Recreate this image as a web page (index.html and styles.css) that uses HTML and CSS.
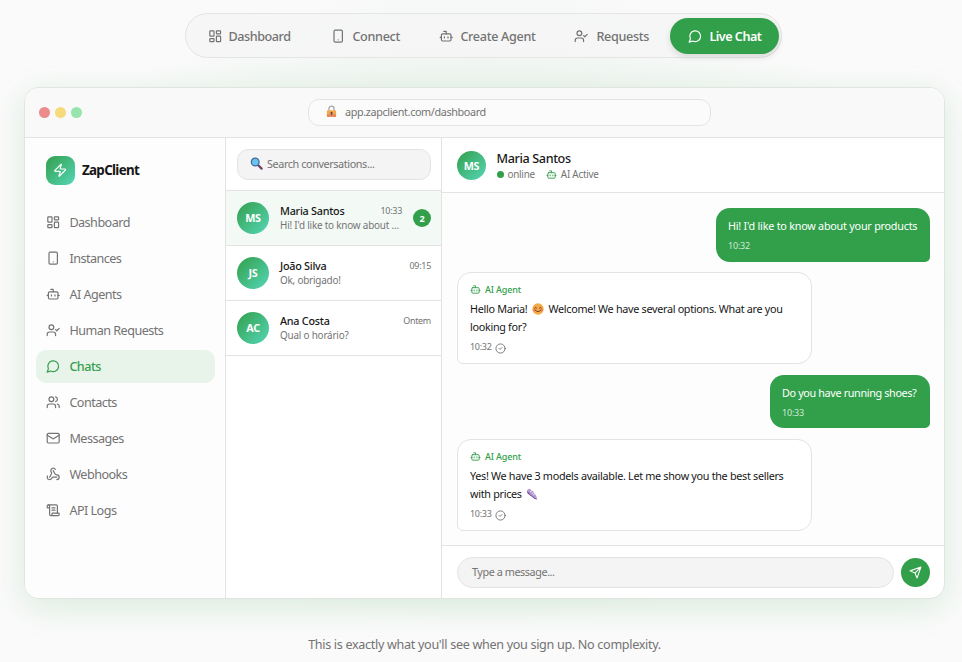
FILE: index.html
```html
<!DOCTYPE html>
<html lang="en">
<head>
<meta charset="utf-8">
<title>ZapClient</title>
<link rel="stylesheet" href="styles.css">
</head>
<body>
<svg class="sprite" aria-hidden="true">
  <symbol id="dashboard" viewBox="0 0 24 24"><rect x="3" y="3" width="7" height="9" rx="1"/><rect x="14" y="3" width="7" height="5" rx="1"/><rect x="14" y="12" width="7" height="9" rx="1"/><rect x="3" y="16" width="7" height="5" rx="1"/></symbol>
  <symbol id="phone" viewBox="0 0 24 24"><rect x="5" y="2" width="14" height="20" rx="2"/><path d="M12 18h.01"/></symbol>
  <symbol id="bot" viewBox="0 0 24 24"><path d="M12 8V4H8"/><rect x="4" y="8" width="16" height="12" rx="2"/><path d="M2 14h2M20 14h2M15 13v2M9 13v2"/></symbol>
  <symbol id="usercheck" viewBox="0 0 24 24"><path d="m16 11 2 2 4-4"/><path d="M16 21v-2a4 4 0 0 0-4-4H6a4 4 0 0 0-4 4v2"/><circle cx="9" cy="7" r="4"/></symbol>
  <symbol id="chat" viewBox="0 0 24 24"><path d="M7.9 20A9 9 0 1 0 4 16.1L2 22Z"/></symbol>
  <symbol id="users" viewBox="0 0 24 24"><path d="M16 21v-2a4 4 0 0 0-4-4H6a4 4 0 0 0-4 4v2"/><circle cx="9" cy="7" r="4"/><path d="M22 21v-2a4 4 0 0 0-3-3.87M16 3.13a4 4 0 0 1 0 7.75"/></symbol>
  <symbol id="mail" viewBox="0 0 24 24"><rect x="2" y="4" width="20" height="16" rx="2"/><path d="m22 7-8.97 5.7a1.94 1.94 0 0 1-2.06 0L2 7"/></symbol>
  <symbol id="webhook" viewBox="0 0 24 24"><path d="M18 16.98h-5.99c-1.1 0-1.95.94-2.48 1.9A4 4 0 0 1 2 17c.01-.7.2-1.4.57-2"/><path d="m6 17 3.13-5.78c.53-.97.1-2.18-.5-3.1a4 4 0 1 1 6.89-4.06"/><path d="m12 6 3.13 5.73C15.66 12.7 16.9 13 18 13a4 4 0 0 1 0 8"/></symbol>
  <symbol id="scroll" viewBox="0 0 24 24"><path d="M15 12h-5M15 8h-5M19 17V5a2 2 0 0 0-2-2H4"/><path d="M8 21h12a2 2 0 0 0 2-2v-1a1 1 0 0 0-1-1H11a1 1 0 0 0-1 1v1a2 2 0 1 1-4 0V5a2 2 0 1 0-4 0v2a1 1 0 0 0 1 1h3"/></symbol>
  <symbol id="zap" viewBox="0 0 24 24"><path d="M4 14a1 1 0 0 1-.78-1.63l9.9-10.2a.5.5 0 0 1 .86.46l-1.92 6.02A1 1 0 0 0 13 10h7a1 1 0 0 1 .78 1.63l-9.9 10.2a.5.5 0 0 1-.86-.46l1.92-6.02A1 1 0 0 0 11 14z"/></symbol>
  <symbol id="send" viewBox="0 0 24 24"><path d="m22 2-7 20-4-9-9-4ZM22 2 11 13"/></symbol>
  <symbol id="check" viewBox="0 0 24 24"><circle cx="12" cy="12" r="10"/><path d="m9 12 2 2 4-4"/></symbol>
</svg>

<nav class="tabs">
  <a class="tab t1"><svg class="icon"><use href="#dashboard"/></svg><span>Dashboard</span></a>
  <a class="tab t2"><svg class="icon"><use href="#phone"/></svg><span>Connect</span></a>
  <a class="tab t3"><svg class="icon"><use href="#bot"/></svg><span>Create Agent</span></a>
  <a class="tab t4"><svg class="icon"><use href="#usercheck"/></svg><span>Requests</span></a>
  <a class="tab t5 active"><svg class="icon"><use href="#chat"/></svg><span>Live Chat</span></a>
</nav>

<main class="window">
  <header class="chrome">
    <div class="dots"><i class="red"></i><i class="yellow"></i><i class="green"></i></div>
    <div class="address">
      <svg class="lock" viewBox="0 0 12 14"><path d="M3.2 6V4a2.8 2.8 0 0 1 5.6 0v2" fill="none" stroke="#a9a6ad" stroke-width="1.4"/><rect x="1" y="5.5" width="10" height="7.5" rx="1" fill="#f0a94e"/><path d="M1 10h10v2a1 1 0 0 1-1 1H2a1 1 0 0 1-1-1z" fill="#e8895b"/><rect x="5.2" y="7.2" width="1.7" height="3.6" rx=".7" fill="#684442"/></svg>
      <span>app.zapclient.com/dashboard</span>
    </div>
  </header>
  <div class="body">
    <aside class="sidebar">
      <div class="brand"><span class="logo"><svg class="icon"><use href="#zap"/></svg></span><b>ZapClient</b></div>
      <a class="item"><svg class="icon"><use href="#dashboard"/></svg>Dashboard</a>
      <a class="item"><svg class="icon"><use href="#phone"/></svg>Instances</a>
      <a class="item"><svg class="icon"><use href="#bot"/></svg>AI Agents</a>
      <a class="item"><svg class="icon"><use href="#usercheck"/></svg>Human Requests</a>
      <a class="item active"><svg class="icon"><use href="#chat"/></svg>Chats</a>
      <a class="item"><svg class="icon"><use href="#users"/></svg>Contacts</a>
      <a class="item"><svg class="icon"><use href="#mail"/></svg>Messages</a>
      <a class="item"><svg class="icon"><use href="#webhook"/></svg>Webhooks</a>
      <a class="item"><svg class="icon"><use href="#scroll"/></svg>API Logs</a>
    </aside>

    <section class="list">
      <div class="searchbar"><div class="search">
        <svg class="glass" viewBox="0 0 14 14"><path d="m8.5 8.5 4 4" stroke="#704572" stroke-width="2.4" stroke-linecap="round"/><circle cx="5.6" cy="5.4" r="4.2" fill="#68c4ec" stroke="#43679a" stroke-width="1.3"/></svg>
        <span>Search conversations...</span></div></div>
      <div class="row selected"><span class="avatar">MS</span><div class="info"><div class="top"><b>Maria Santos</b><time>10:33</time></div><p>Hi! I'd like to know about ...</p></div><span class="badge">2</span></div>
      <div class="row"><span class="avatar">JS</span><div class="info"><div class="top"><b>João Silva</b><time>09:15</time></div><p>Ok, obrigado!</p></div></div>
      <div class="row"><span class="avatar">AC</span><div class="info"><div class="top"><b>Ana Costa</b><time>Ontem</time></div><p>Qual o horário?</p></div></div>
    </section>

    <section class="chat">
      <header class="person">
        <span class="avatar small">MS</span>
        <div><h2>Maria Santos</h2><div class="status"><i></i><span class="online">online</span><svg class="icon"><use href="#bot"/></svg><span>AI Active</span></div></div>
      </header>
      <div class="messages">
        <div class="msg mine first"><p>Hi! I'd like to know about your products</p><time>10:32</time></div>
        <div class="msg agent">
          <div class="who"><svg class="icon"><use href="#bot"/></svg>AI Agent</div>
          <p>Hello Maria! <svg class="smile" viewBox="0 0 12 12"><circle cx="6" cy="6" r="5.7" fill="#f5aa45"/><circle cx="2.5" cy="7" r="1.4" fill="#ef7f55"/><circle cx="9.5" cy="7" r="1.4" fill="#ef7f55"/><path d="M2.6 5q1-1.5 2 0M7.4 5q1-1.5 2 0M3.3 7.2q2.7 3 5.4 0" fill="none" stroke="#5c3932" stroke-width=".9" stroke-linecap="round"/></svg> Welcome! We have several options. What are you<br>looking for?</p>
          <div class="sent"><time>10:32</time><svg class="icon"><use href="#check"/></svg></div>
        </div>
        <div class="msg mine second"><p>Do you have running shoes?</p><time>10:33</time></div>
        <div class="msg agent">
          <div class="who"><svg class="icon"><use href="#bot"/></svg>AI Agent</div>
          <p>Yes! We have 3 models available. Let me show you the best sellers<br>with prices <svg class="shoe" viewBox="0 0 12 12"><path d="M.9 3.2C1 1.7 2.3.8 3.8.7l2 2 1.6.6.9 2.2 1.8 1.9 1.2 4.1-2.6-.8-4-3.4L1.6 4.6z" fill="#b59bd3"/><path d="m.9 3.2.7 2.2L4.9 8l3.8 2.9 2.6.6-2.6-1.7-3.8-3L1.8 3.6z" fill="#775591"/><path d="m4 3.9 1.8-1M5.7 5.3l1.9-1M7 6.9l1.8-.9" stroke="#f3eaff" stroke-width=".7"/></svg></p>
          <div class="sent"><time>10:33</time><svg class="icon"><use href="#check"/></svg></div>
        </div>
      </div>
      <footer class="composer"><div class="field"><span>Type a message...</span></div><span class="sendbtn"><svg class="icon"><use href="#send"/></svg></span></footer>
    </section>
  </div>
</main>
<p class="caption">This is exactly what you'll see when you sign up. No complexity.</p>
</body>
</html>
```
FILE: styles.css
```css
* { box-sizing: border-box; }
body {
  margin: 0; width: 962px; height: 662px; overflow: hidden;
  font-family: "Noto Sans", "Open Sans", sans-serif; font-size: 12.6px; color: #737373;
  background: radial-gradient(ellipse 470px 330px at 481px 300px, #e3f0e7 0%, #e8f2eb 45%, #fafafa 100%) #fafafa;
}
p, h2 { margin: 0; }
.sprite { position: absolute; width: 0; height: 0; }
.icon { width: 14.4px; height: 14.4px; flex: none; fill: none; stroke: currentColor; stroke-width: 2; stroke-linecap: round; stroke-linejoin: round; }
.tabs {
  width: 597px; height: 45px; margin: 13px 0 0 185px; padding: 4px 3px 3px 4px;
  display: flex; align-items: center; gap: 4px;
  border: 1px solid #e3e4e3; border-radius: 23px; background: rgba(245, 245, 245, .8);
}
.tab { height: 36px; padding-left: 18px; display: flex; align-items: center; gap: 7px; border-radius: 18px; font-weight: 500; letter-spacing: -.3px; white-space: nowrap; flex: none; }
.t1 { width: 119px; gap: 6px; letter-spacing: -.42px; } .t2 { width: 104px; } .t3 { width: 131px; } .t4 { width: 110px; gap: 8px; } .t5 { width: 109px; }
.tab.active { color: #fff; background: #329f4b; font-weight: 600; letter-spacing: -.5px; box-shadow: 0 3px 6px rgba(0, 0, 0, .12); }

.window {
  width: 921px; height: 512px; margin: 29px 0 0 24px; overflow: hidden;
  border: 1px solid #e2e4e2; border-radius: 15px; background: #fff;
  box-shadow: 0 8px 32px rgba(50, 159, 75, .16);
}
.chrome { height: 50px; display: flex; align-items: center; border-bottom: 1px solid #e3e3e3; background: #f9f9f9; }
.dots { display: flex; gap: 5px; width: 283px; padding-left: 14px; }
.dots i { width: 11px; height: 11px; border-radius: 50%; }
.red { background: #ec8b8b; } .yellow { background: #f5db7b; } .green { background: #98e4ae; }
.address { width: 403px; height: 27px; display: flex; align-items: center; padding: 0 0 2px 17px; border: 1px solid #e4e4e4; border-radius: 11px; background: #fbfbfb; font-size: 10.8px; letter-spacing: -.37px; }
.lock { width: 11px; height: 13px; margin-right: 8px; }
.body { height: 460px; display: flex; }
.sidebar { width: 201px; flex: none; padding: 17px 10px 0 11px; border-right: 1px solid #e3e3e3; background: #fdfdfd; }
.brand { display: flex; align-items: center; gap: 7px; height: 30px; margin: 0 0 21px 10px; color: #171717; font-size: 13.4px; letter-spacing: -.7px; }
.logo { width: 29px; height: 29px; display: grid; place-items: center; border-radius: 9px; color: #fff; background: linear-gradient(135deg, #329f4b, #55d6b7); }
.item { height: 33px; margin-bottom: 3px; padding-left: 10px; display: flex; align-items: center; gap: 9px; border-radius: 10px; letter-spacing: -.52px; }
.item.active { color: #329f4b; background: #e8f3ea; font-weight: 500; }
.list { width: 216px; flex: none; border-right: 1px solid #e3e3e3; background: #fff; }
.searchbar { height: 53px; padding: 11px 10px 0 11px; border-bottom: 1px solid #e3e3e3; }
.search { height: 31px; display: flex; align-items: center; padding: 0 0 2px 12px; border: 1px solid #e3e3e3; border-radius: 11px; background: #f4f4f4; font-size: 10.8px; letter-spacing: -.39px; }
.glass { width: 13px; height: 13px; margin-right: 4px; }
.row { height: 55px; display: flex; align-items: center; padding: 0 10px 0 11px; border-bottom: 1px solid #e3e3e3; }
.row.selected { background: #f3faf6; }
.avatar { width: 32px; height: 32px; flex: none; display: grid; place-items: center; padding-bottom: 1px; border-radius: 50%; color: #fff; background: linear-gradient(135deg, #329f4b, #55d6b7); font-size: 10.8px; font-weight: 700; letter-spacing: -.3px; }
.avatar.small { width: 29px; height: 29px; }
.info { flex: 1; min-width: 0; margin-left: 11px; padding-bottom: 1px; }
.top { display: flex; justify-content: space-between; line-height: 15px; }
.top b { color: #171717; font-size: 10.8px; font-weight: 500; letter-spacing: -.25px; }
.top time { font-size: 9px; letter-spacing: -.3px; }
.info p { font-size: 9.9px; line-height: 14px; letter-spacing: -.19px; white-space: nowrap; }
.badge { width: 18px; height: 18px; flex: none; margin-left: 11px; display: grid; place-items: center; border-radius: 50%; background: #329f4b; color: #fff; font-size: 9px; font-weight: 700; }
.chat { flex: 1; display: flex; flex-direction: column; }
.person { height: 55px; display: flex; align-items: center; gap: 10.5px; padding: 1px 0 0 15px; border-bottom: 1px solid #e3e3e3; }
.person h2 { color: #171717; font-size: 12.6px; font-weight: 500; line-height: 17px; letter-spacing: -.37px; }
.status { display: flex; align-items: center; height: 15px; font-size: 9.9px; letter-spacing: -.25px; }
.status i { width: 7px; height: 7px; margin-right: 4px; border-radius: 50%; background: #329f4b; }
.online { margin-right: 11px; }
.status .icon, .who .icon { width: 11px; height: 11px; margin-right: 4px; color: #329f4b; }
.messages { height: 352px; padding: 15px 14px 0 15px; display: flex; flex-direction: column; background: #fdfdfd; }
.msg { font-size: 10.8px; line-height: 17.5px; letter-spacing: -.3px; white-space: nowrap; }
.mine { align-self: flex-end; height: 54px; padding: 9px 12px; border-radius: 14px 14px 5px 14px; background: #329f4b; color: #fff; }
.mine time { display: block; margin-top: 2px; color: #d1ebd6; font-size: 9px; letter-spacing: -.2px; }
.first { width: 214px; margin-bottom: 10px; letter-spacing: -.23px; }
.second { width: 160px; height: 53px; margin: 11px 0; letter-spacing: -.35px; }
.agent { width: 355px; height: 92px; padding: 8px 12px; border: 1px solid #e3e3e3; border-radius: 14px 14px 14px 6px; background: #fff; }
.agent p { margin-top: -1px; color: #171717; }
.who { display: flex; align-items: center; height: 17px; margin-bottom: 3px; color: #329f4b; font-size: 9px; font-weight: 500; letter-spacing: -.15px; }
.smile, .shoe { width: 12px; height: 12px; margin: 0 2px; vertical-align: -2px; }
.sent { display: flex; align-items: center; height: 16px; margin-top: 4px; gap: 3px; font-size: 9px; letter-spacing: -.3px; }
.sent .icon { width: 11px; height: 11px; margin-top: 2px; }
.composer { height: 53px; display: flex; align-items: center; gap: 7px; padding: 1px 14px 0 15px; border-top: 1px solid #e3e3e3; }
.field { width: 437px; height: 31px; padding: 0 0 2px 14px; display: flex; align-items: center; border: 1px solid #e3e3e3; border-radius: 16px; background: #f4f4f4; font-size: 10.8px; letter-spacing: -.42px; }
.sendbtn { width: 29px; height: 29px; display: grid; place-items: center; border-radius: 50%; color: #fff; background: #329f4b; }
.sendbtn .icon { width: 13px; height: 13px; }
.caption { margin-top: 36px; text-align: center; font-size: 12.6px; line-height: 19px; letter-spacing: -.32px; padding-left: 7px; }
```
